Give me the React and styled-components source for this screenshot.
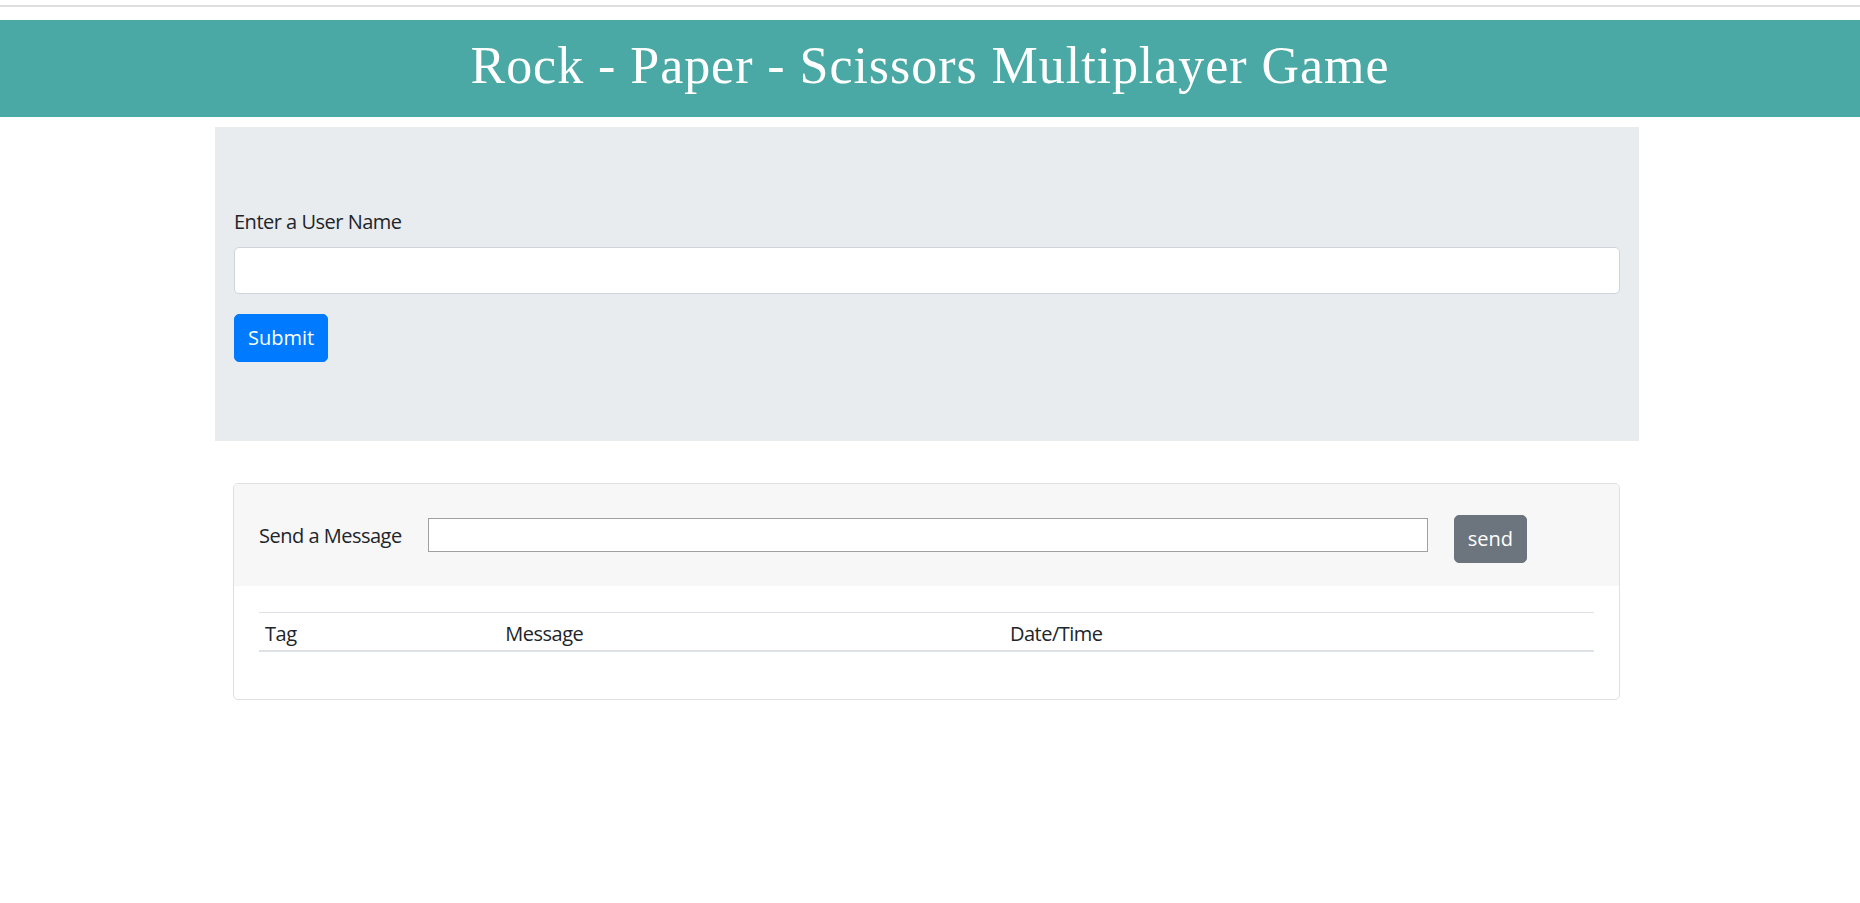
import React, { useState } from "react";
import styled, { createGlobalStyle } from "styled-components";

const GlobalStyle = createGlobalStyle`
  body {
    margin: 0;
    background: #fff;
    color: #212529;
    font-family: "Open Sans", "Noto Sans", Arial, sans-serif;
    font-size: 20px;
    line-height: 1.5;
    letter-spacing: -0.5px;
  }
  * {
    box-sizing: border-box;
  }
`;

export default function App() {
  const [userName, setUserName] = useState("");
  const [message, setMessage] = useState("");
  const [messages] = useState([]);

  return (
    <>
      <GlobalStyle />
      <TopRule />
      <Header>
        <h1>Rock - Paper - Scissors Multiplayer Game</h1>
      </Header>
      <Main>
        <Container>
          <Jumbotron>
            <form onSubmit={(e) => e.preventDefault()}>
              <FormGroup>
                <label htmlFor="userName">Enter a User Name</label>
                <TextInput
                  id="userName"
                  type="text"
                  value={userName}
                  onChange={(e) => setUserName(e.target.value)}
                />
              </FormGroup>
              <Button type="submit" $variant="primary">
                Submit
              </Button>
            </form>
          </Jumbotron>

          <Card>
            <CardHeader>
              <label htmlFor="message">Send a Message</label>
              <MessageInput
                id="message"
                type="text"
                value={message}
                onChange={(e) => setMessage(e.target.value)}
              />
              <Button type="button" $variant="secondary">
                send
              </Button>
            </CardHeader>
            <CardBody>
              <Table>
                <thead>
                  <tr>
                    <th style={{ width: "18%" }}>Tag</th>
                    <th style={{ width: "37.8%" }}>Message</th>
                    <th>Date/Time</th>
                  </tr>
                </thead>
                <tbody>
                  {messages.map((m, i) => (
                    <tr key={i}>
                      <td>{m.tag}</td>
                      <td>{m.text}</td>
                      <td>{m.time}</td>
                    </tr>
                  ))}
                </tbody>
              </Table>
            </CardBody>
          </Card>
        </Container>
      </Main>
    </>
  );
}

const TopRule = styled.div`
  height: 2px;
  margin-top: 5px;
  background: #dedede;
`;

const Header = styled.header`
  margin-top: 13px;
  height: 97px;
  padding-bottom: 5px;
  background-color: #4aa9a4;
  display: flex;
  align-items: center;
  justify-content: center;
  h1 {
    margin: 0;
    color: #fff;
    font-family: "Liberation Serif", "DejaVu Serif", serif;
    font-weight: 400;
    font-size: 52px;
    line-height: 60px;
    letter-spacing: 0.95px;
  }
`;

const Main = styled.main`
  padding-right: 6px;
`;

const Container = styled.div`
  width: 1424px;
  margin: 10px auto 0;
`;

const Jumbotron = styled.section`
  background-color: #e9ecef;
  padding: 80px 19px 79px;
`;

const FormGroup = styled.div`
  margin-bottom: 20px;
  label {
    display: inline-block;
    margin-bottom: 10px;
  }
`;

const TextInput = styled.input`
  display: block;
  width: 100%;
  height: 47px;
  padding: 7px 15px;
  font: inherit;
  color: #495057;
  background: #fff;
  border: 1px solid #ced4da;
  border-radius: 5px;
  outline: none;
`;

const Button = styled.button`
  display: inline-block;
  height: 48px;
  padding: 7px 13px;
  font: inherit;
  color: #fff;
  background-color: ${(p) => (p.$variant === "primary" ? "#007bff" : "#6c757d")};
  border: 1px solid ${(p) => (p.$variant === "primary" ? "#007bff" : "#6c757d")};
  border-radius: 5px;
  cursor: pointer;
`;

const Card = styled.div`
  margin: 42px 19px 0 18px;
  border: 1px solid rgba(0, 0, 0, 0.125);
  border-radius: 5px;
  overflow: hidden;
`;

const CardHeader = styled.div`
  display: flex;
  align-items: flex-start;
  gap: 26px;
  padding: 31px 25px 23px;
  background-color: #f7f7f7;
  label {
    margin-top: 6px;
    line-height: 30px;
  }
`;

const MessageInput = styled.input`
  width: 1000px;
  height: 34px;
  margin-top: 3px;
  padding: 2px 4px;
  font: inherit;
  background: #fff;
  border: 1px solid #a0a0a0;
  border-radius: 0;
  outline: none;
`;

const CardBody = styled.div`
  padding: 26px 25px 27px;
`;

const Table = styled.table`
  width: 100%;
  margin-bottom: 20px;
  border-collapse: collapse;
  th {
    text-align: left;
    font-weight: 400;
    line-height: 30px;
    padding: 6px 6px 1px;
    border-top: 1px solid #dee2e6;
    border-bottom: 2px solid #dee2e6;
  }
`;
